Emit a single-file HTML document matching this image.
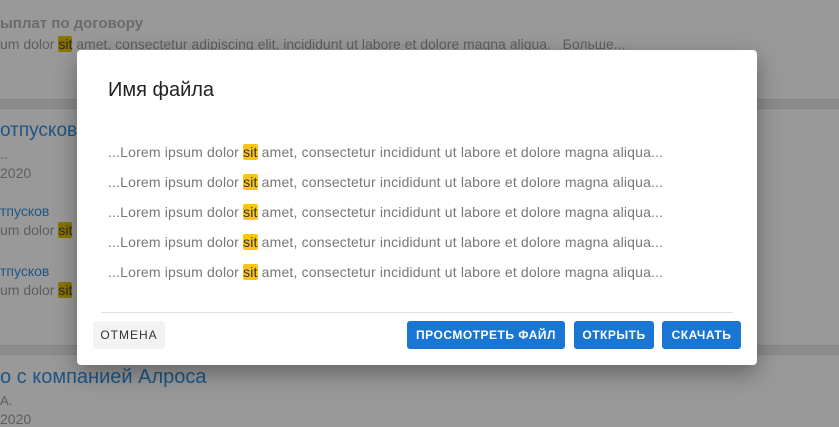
<!DOCTYPE html>
<html><head><meta charset="utf-8"><style>
body{margin:0;width:839px;height:424px;overflow:hidden;background:#999;font-family:"Liberation Sans",sans-serif;position:relative}
.a{position:absolute;white-space:nowrap}
.g{color:#5e5e5e;font-size:14px}
.b{color:#1f5584}
.hl{background:#8a7400;color:#2a2a2a;border-radius:2px}
.band{position:absolute;left:0;width:839px;height:8px;background:#8c8c8c;border-top:1px solid #858585;border-bottom:1px solid #858585}
.dlg{position:absolute;left:77px;top:50px;width:680px;height:315px;background:#fff;border-radius:4px;box-shadow:0 8px 24px rgba(0,0,0,.35)}
.ln{position:absolute;left:31px;font-size:14px;letter-spacing:0.17px;color:#777;white-space:nowrap}
.y{background:#fcc419;color:#333;border-radius:2px}
.btn{position:absolute;top:271px;height:28px;line-height:28px;font-size:12px;font-weight:bold;letter-spacing:.5px;text-align:center;border-radius:3px;color:#fff;background:#1976d2}
</style></head><body>
<div class="a g" style="left:0;top:15px;font-size:15px;font-weight:bold;color:#6b6b6b">ыплат по договору</div>
<div class="a g" style="left:0;top:36px">um dolor <span class="hl">sit</span> amet, consectetur adipiscing elit, incididunt ut labore et dolore magna aliqua. &nbsp; Больше...</div>
<div class="band" style="top:99px"></div>
<div class="a b" style="left:0;top:120px;font-size:19px">отпусков</div>
<div class="a g" style="left:0;top:146px">..</div>
<div class="a g" style="left:0;top:165px">2020</div>
<div class="a b" style="left:0;top:203px;font-size:14px">тпусков</div>
<div class="a g" style="left:0;top:222px">um dolor <span class="hl">sit</span> a</div>
<div class="a b" style="left:0;top:263px;font-size:14px">тпусков</div>
<div class="a g" style="left:0;top:282px">um dolor <span class="hl">sit</span> a</div>
<div class="band" style="top:345px"></div>
<div class="a b" style="left:0;top:366px;font-size:20px">о с компанией Алроса</div>
<div class="a g" style="left:0;top:393px;font-size:13px">А.</div>
<div class="a g" style="left:0;top:411px">2020</div>
<div class="dlg">
<div class="a" style="left:31px;top:29px;font-size:20px;color:#222">Имя файла</div>
<div class="ln" style="top:94px">...Lorem ipsum dolor <span class="y">sit</span> amet, consectetur incididunt ut labore et dolore magna aliqua...</div>
<div class="ln" style="top:124px">...Lorem ipsum dolor <span class="y">sit</span> amet, consectetur incididunt ut labore et dolore magna aliqua...</div>
<div class="ln" style="top:154px">...Lorem ipsum dolor <span class="y">sit</span> amet, consectetur incididunt ut labore et dolore magna aliqua...</div>
<div class="ln" style="top:184px">...Lorem ipsum dolor <span class="y">sit</span> amet, consectetur incididunt ut labore et dolore magna aliqua...</div>
<div class="ln" style="top:214px">...Lorem ipsum dolor <span class="y">sit</span> amet, consectetur incididunt ut labore et dolore magna aliqua...</div>
<div style="position:absolute;left:24px;top:262px;width:632px;height:1px;background:#e0e0e0"></div>
<div class="btn" style="left:16px;width:72px;background:#f3f3f3;color:#333;font-weight:normal;letter-spacing:1px">ОТМЕНА</div>
<div class="btn" style="left:330px;width:158px">ПРОСМОТРЕТЬ ФАЙЛ</div>
<div class="btn" style="left:497px;width:80px">ОТКРЫТЬ</div>
<div class="btn" style="left:585px;width:79px">СКАЧАТЬ</div>
</div>
</body></html>
